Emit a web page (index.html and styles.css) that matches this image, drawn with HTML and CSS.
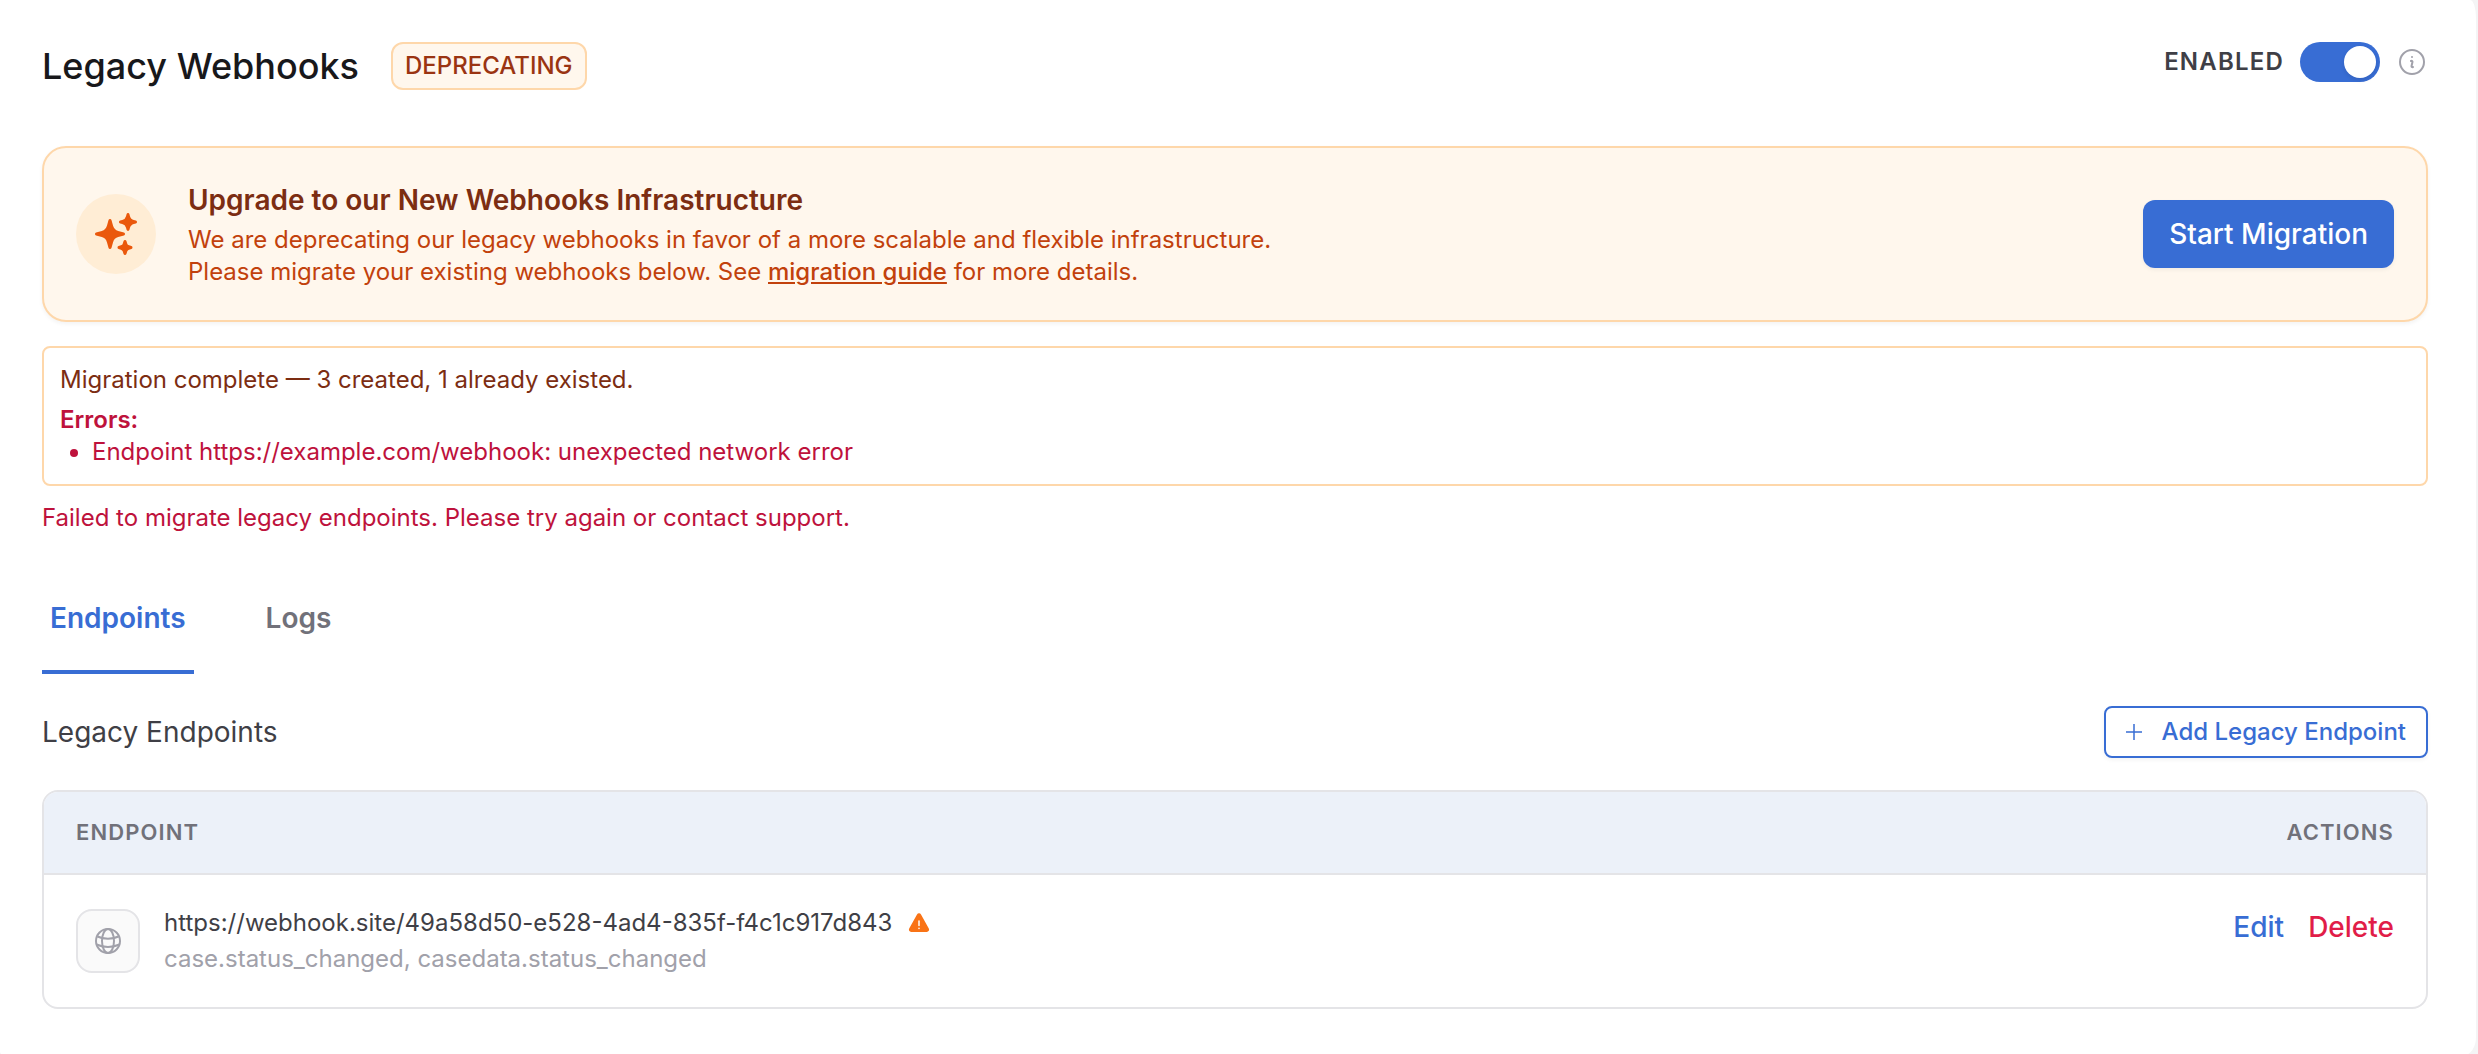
FILE: index.html
```
<!DOCTYPE html>
<html lang="en">
<head>
    <meta charset="UTF-8">
    <meta name="viewport" content="width=device-width, initial-scale=1.0">
    <title>Legacy Webhooks</title>
    <link rel="stylesheet" href="styles.css">
</head>
<body>
    <main class="card">
        <header class="card-header">
            <div class="title-group">
                <h1>Legacy Webhooks</h1>
                <span class="badge">DEPRECATING</span>
            </div>
            <div class="status">
                <label for="enabled">ENABLED</label>
                <input type="checkbox" id="enabled" class="toggle" checked>
                <svg class="info-icon" viewBox="0 0 24 24" fill="none" stroke="currentColor" stroke-width="1.5" stroke-linecap="round" stroke-linejoin="round">
                    <path d="M11.25 11.25l.041-.02a.75.75 0 011.063.852l-.708 2.836a.75.75 0 001.063.853l.041-.021M21 12a9 9 0 11-18 0 9 9 0 0118 0zm-9-3.75h.008v.008H12V8.25z"/>
                </svg>
            </div>
        </header>

        <section class="banner">
            <div class="banner-icon">
                <svg viewBox="0 0 24 24" fill="currentColor">
                    <path d="M9 4.5a.75.75 0 01.721.544l.813 2.846a3.75 3.75 0 002.576 2.576l2.846.813a.75.75 0 010 1.442l-2.846.813a3.75 3.75 0 00-2.576 2.576l-.813 2.846a.75.75 0 01-1.442 0l-.813-2.846a3.75 3.75 0 00-2.576-2.576l-2.846-.813a.75.75 0 010-1.442l2.846-.813A3.75 3.75 0 007.466 7.89l.813-2.846A.75.75 0 019 4.5zM18 1.5a.75.75 0 01.728.568l.258 1.036c.236.94.97 1.674 1.91 1.91l1.036.258a.75.75 0 010 1.456l-1.036.258c-.94.236-1.674.97-1.91 1.91l-.258 1.036a.75.75 0 01-1.456 0l-.258-1.036a2.625 2.625 0 00-1.91-1.91l-1.036-.258a.75.75 0 010-1.456l1.036-.258a2.625 2.625 0 001.91-1.91l.258-1.036A.75.75 0 0118 1.5zM16.5 15a.75.75 0 01.712.513l.394 1.183c.15.447.5.799.948.948l1.183.395a.75.75 0 010 1.422l-1.183.395c-.447.15-.799.5-.948.948l-.395 1.183a.75.75 0 01-1.424 0l-.395-1.183a1.5 1.5 0 00-.948-.948l-1.183-.395a.75.75 0 010-1.422l1.183-.395c.447-.15.799-.5.948-.948l.395-1.183A.75.75 0 0116.5 15z"/>
                </svg>
            </div>
            <div class="banner-text">
                <h2>Upgrade to our New Webhooks Infrastructure</h2>
                <p>We are deprecating our legacy webhooks in favor of a more scalable and flexible infrastructure.<br>
                Please migrate your existing webhooks below. See <a href="#">migration guide</a> for more details.</p>
            </div>
            <button type="button" class="btn-primary">Start Migration</button>
        </section>

        <section class="result">
            <p>Migration complete — 3 created, 1 already existed.</p>
            <div class="result-errors">
                <p class="result-label">Errors:</p>
                <ul>
                    <li>Endpoint https://example.com/webhook: unexpected network error</li>
                </ul>
            </div>
        </section>
        <p class="failure">Failed to migrate legacy endpoints. Please try again or contact support.</p>

        <nav class="tabs">
            <a href="#" class="tab active">Endpoints</a>
            <a href="#" class="tab">Logs</a>
        </nav>

        <div class="section-header">
            <h3>Legacy Endpoints</h3>
            <button type="button" class="btn-outline">
                <svg viewBox="0 0 16 16" fill="none" stroke="currentColor" stroke-width="1.5">
                    <path d="M8 0v16M0 8h16"/>
                </svg>
                Add Legacy Endpoint
            </button>
        </div>

        <div class="table-wrap">
            <table>
                <thead>
                    <tr>
                        <th>ENDPOINT</th>
                        <th class="right">ACTIONS</th>
                    </tr>
                </thead>
                <tbody>
                    <tr>
                        <td>
                            <div class="endpoint">
                                <div class="endpoint-icon">
                                    <svg viewBox="0 0 26 26" fill="none" stroke="currentColor" stroke-width="2">
                                        <circle cx="13" cy="13" r="12"/>
                                        <ellipse cx="13" cy="13" rx="6" ry="12"/>
                                        <path d="M2.500 8.500c6 3 15 3 21 0M1.500 16.500c7 3 16 3 23 0"/>
                                    </svg>
                                </div>
                                <div class="endpoint-text">
                                    <div class="endpoint-url">
                                        https://webhook.site/49a58d50-e528-4ad4-835f-f4c1c917d843
                                        <svg viewBox="0 0 22 20">
                                            <path fill="#f97316" d="M9 1.4a2.3 2.3 0 014 0l7.8 14.2c.9 1.6-.2 3.4-2 3.4H3.200c-1.800 0-2.900-1.800-2-3.400z"/>
                                            <path stroke="#fff" stroke-width="1.500" stroke-linecap="round" d="M11 8v4.500M11 15.300v.2"/>
                                        </svg>
                                    </div>
                                    <div class="endpoint-events">case.status_changed, casedata.status_changed</div>
                                </div>
                            </div>
                        </td>
                        <td class="actions">
                            <div class="action-list">
                                <button type="button" class="link">Edit</button>
                                <button type="button" class="link danger">Delete</button>
                            </div>
                        </td>
                    </tr>
                </tbody>
            </table>
        </div>
    </main>
</body>
</html>
```

FILE: styles.css
```
* {
    box-sizing: border-box;
}
body {
    margin: 0;
    background: #f4f4f5;
    color: #3f3f46;
    font-family: Inter, "Liberation Sans", sans-serif;
    font-size: 24px;
    line-height: 32px;
}
h1, h2, h3, p, ul {
    margin: 0;
}
button {
    font-family: inherit;
    cursor: pointer;
}
.card {
    margin-right: 2px;
    padding: 42px 48px 46px 42px;
    background: #fff;
    border-radius: 0 6px 12px 4px / 0 18px 18px 4px;
}
.card-header {
    display: flex;
    justify-content: space-between;
    align-items: flex-start;
    margin-bottom: 56px;
}
.title-group {
    display: flex;
    align-items: center;
    gap: 32px;
}
h1 {
    color: #18181b;
    font-size: 36px;
    font-weight: 500;
    line-height: 48px;
}
.badge {
    padding: 6px 12px;
    border: 2px solid #fed7aa;
    border-radius: 12px;
    background: #fff7ed;
    color: #9a3412;
    font-weight: 500;
}
.status {
    display: flex;
    align-items: center;
    gap: 16px;
    height: 40px;
}
.status label {
    font-weight: 600;
    letter-spacing: 0.05em;
}
.toggle {
    appearance: none;
    display: flex;
    justify-content: flex-end;
    width: 80px;
    height: 40px;
    margin: 0;
    padding: 4px;
    border-radius: 20px;
    background: #386dd4;
    cursor: pointer;
}
.toggle::before {
    content: "";
    width: 32px;
    height: 32px;
    border-radius: 50%;
    background: #fff;
    box-shadow: 0 2px 4px rgba(0, 0, 0, 0.1);
}
.toggle:not(:checked) {
    justify-content: flex-start;
    background: #d4d4d8;
}
.info-icon {
    width: 32px;
    height: 32px;
    color: #a1a1aa;
}
.banner {
    display: flex;
    align-items: center;
    gap: 32px;
    padding: 32px;
    border: 2px solid #fed7aa;
    border-radius: 24px;
    background: #fff7ed;
    box-shadow: 0 2px 4px rgba(0, 0, 0, 0.05);
}
.banner-icon {
    display: flex;
    align-items: center;
    justify-content: center;
    width: 80px;
    height: 80px;
    border-radius: 50%;
    background: #ffedd5;
    color: #ea580c;
}
.banner-icon svg {
    width: 48px;
    height: 48px;
}
.banner-text {
    flex: 1;
    color: #c2410c;
}
h2 {
    margin-bottom: 4px;
    color: #7c2d12;
    font-size: 28px;
    font-weight: 600;
    line-height: 40px;
}
.banner-text a {
    color: inherit;
    font-weight: 500;
}
.btn-primary {
    padding: 14px 26px;
    border: none;
    border-radius: 12px;
    background: #386dd4;
    box-shadow: 0 2px 4px rgba(0, 0, 0, 0.05);
    color: #fff;
    font-size: 28px;
    font-weight: 500;
    line-height: 40px;
}
.result {
    margin-top: 24px;
    padding: 16px;
    border: 2px solid #fed7aa;
    border-radius: 8px;
    color: #7c2d12;
}
.result-errors {
    margin-top: 8px;
    color: #be123c;
}
.result-label {
    font-weight: 600;
}
.result ul {
    padding-left: 32px;
}
.failure {
    margin-top: 16px;
    color: #be123c;
}
.tabs {
    display: flex;
    gap: 64px;
    margin-top: 64px;
}
.tab {
    padding: 0 8px 32px;
    border-bottom: 4px solid transparent;
    color: #71717a;
    font-size: 28px;
    font-weight: 600;
    line-height: 40px;
    text-decoration: none;
}
.tab.active {
    border-color: #386dd4;
    color: #386dd4;
}
.section-header {
    display: flex;
    align-items: center;
    justify-content: space-between;
    margin: 32px 0;
}
h3 {
    font-size: 28px;
    font-weight: 400;
    line-height: 40px;
}
.btn-outline {
    display: flex;
    align-items: center;
    gap: 20px;
    padding: 8px 20px;
    border: 2px solid #386dd4;
    border-radius: 8px;
    background: #fff;
    box-shadow: 0 2px 4px rgba(0, 0, 0, 0.05);
    color: #386dd4;
    font-size: 24px;
    font-weight: 500;
    line-height: 32px;
}
.btn-outline svg {
    width: 16px;
    height: 16px;
}
.table-wrap {
    overflow: hidden;
    border: 2px solid #e4e4e7;
    border-radius: 16px;
}
table {
    width: 100%;
    border-spacing: 0;
}
th {
    padding: 24px 32px 25px;
    border-bottom: 2px solid #e4e4e7;
    background: #ecf1f9;
    color: #71717a;
    font-size: 22px;
    font-weight: 600;
    letter-spacing: 0.05em;
    text-align: left;
}
td {
    padding: 28px 32px;
}
.right {
    text-align: right;
}
.endpoint {
    display: flex;
    align-items: center;
    gap: 24px;
}
.endpoint-icon {
    display: flex;
    align-items: center;
    justify-content: center;
    width: 64px;
    height: 64px;
    border: 2px solid #e4e4e7;
    border-radius: 16px;
    background: #fafafa;
    color: #a1a1aa;
}
.endpoint-icon svg {
    width: 26px;
    height: 26px;
}
.endpoint-text {
    padding-bottom: 4px;
}
.endpoint-url {
    display: flex;
    align-items: center;
    gap: 16px;
    line-height: 40px;
}
.endpoint-url svg {
    width: 22px;
    height: 20px;
}
.endpoint-events {
    color: #a1a1aa;
    line-height: 32px;
}
.actions {
    vertical-align: top;
}
.action-list {
    display: flex;
    justify-content: flex-end;
    gap: 24px;
}
.link {
    padding: 0;
    border: none;
    background: none;
    color: #386dd4;
    font-size: 28px;
    font-weight: 500;
    line-height: 48px;
}
.link.danger {
    color: #e11d48;
}
```
